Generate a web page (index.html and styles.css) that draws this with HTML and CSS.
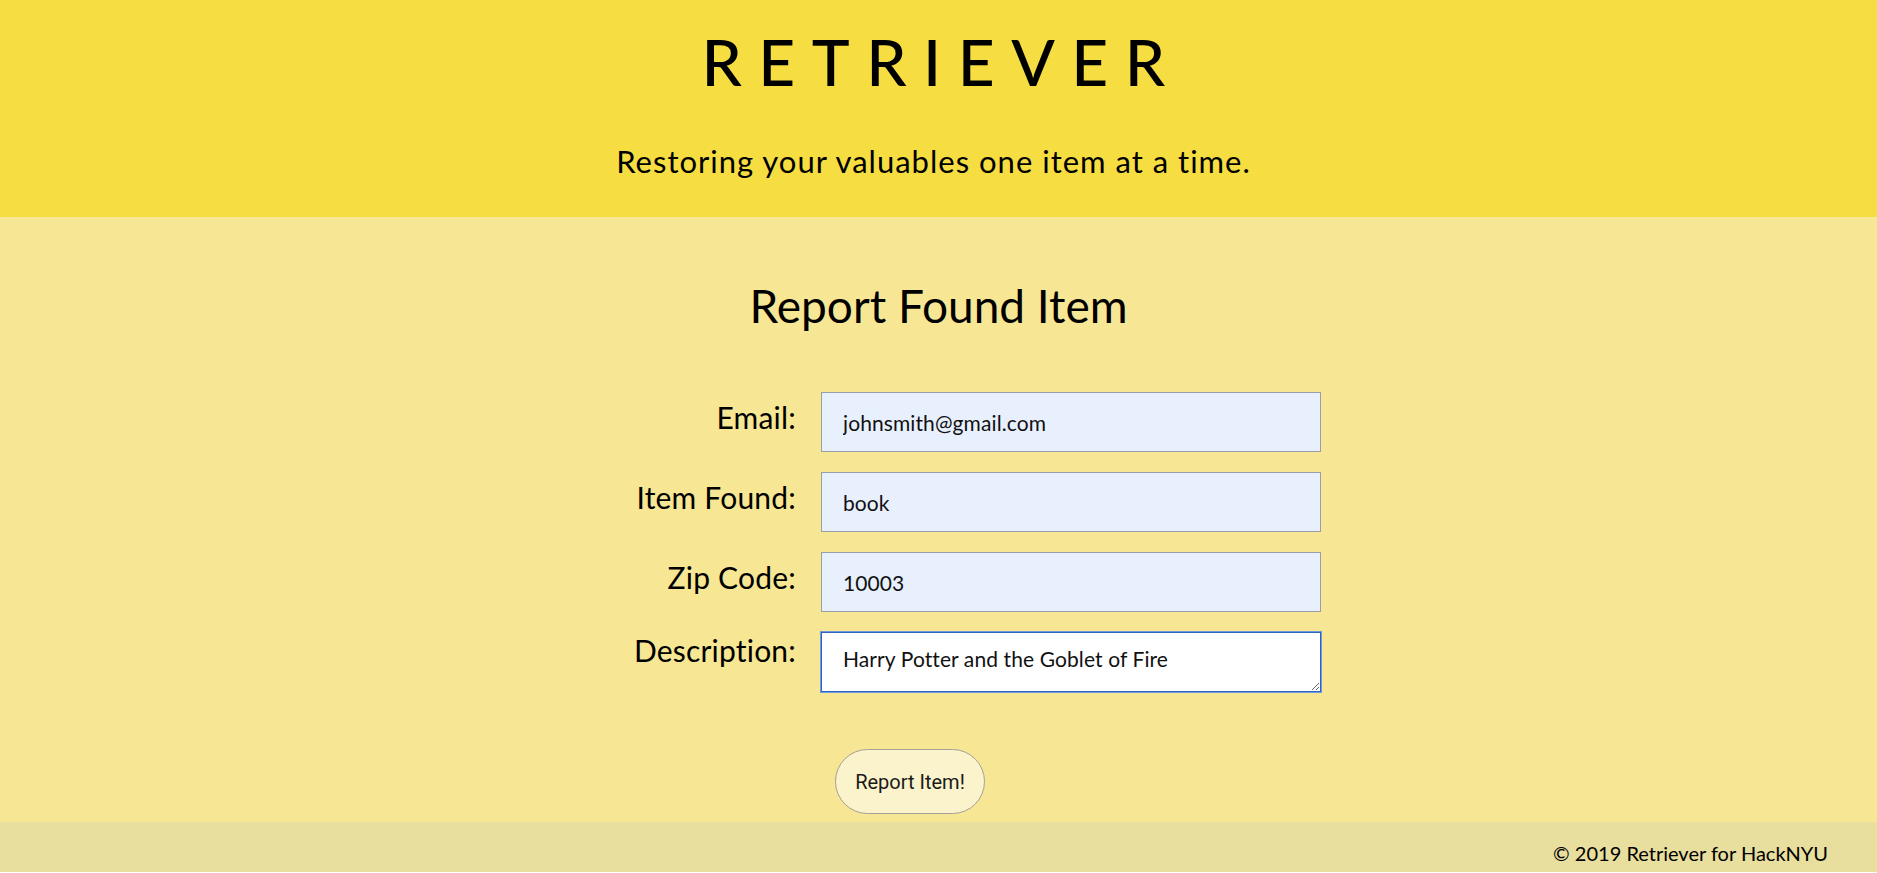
FILE: index.html
```html
<!DOCTYPE html>
<html lang="en">
<head>
<meta charset="utf-8">
<title>Retriever</title>
<link rel="stylesheet" href="styles.css">
</head>
<body>
<header class="hero">
  <h1 class="brand">RETRIEVER</h1>
  <p class="tagline">Restoring your valuables one item at a time.</p>
</header>
<main class="content">
  <h2 class="page-title">Report Found Item</h2>
  <form class="report-form">
    <label class="field-label" for="email">Email:</label>
    <input class="field-input" id="email" type="text" value="johnsmith@gmail.com">
    <label class="field-label" for="item">Item Found:</label>
    <input class="field-input" id="item" type="text" value="book">
    <label class="field-label" for="zip">Zip Code:</label>
    <input class="field-input" id="zip" type="text" value="10003">
    <label class="field-label field-label-top" for="desc">Description:</label>
    <textarea class="field-area" id="desc">Harry Potter and the Goblet of Fire</textarea>
    <div class="actions">
      <button class="submit-btn" type="button">Report Item!</button>
    </div>
  </form>
</main>
<footer class="site-footer">
  <span class="copy">© 2019 Retriever for HackNYU</span>
</footer>
</body>
</html>
```

FILE: styles.css
```css
* { box-sizing: border-box; }
html, body { margin: 0; padding: 0; }
body {
  background: #ffffff;
  font-family: "Lato", "Open Sans", sans-serif;
  color: #000;
}
.hero {
  background: #f5dd42;
  height: 217px;
  padding: 23px 10px 0 0;
  text-align: center;
}
.brand {
  margin: 0 -16px 0 0;
  font-size: 64px;
  line-height: 77px;
  font-weight: 500;
  letter-spacing: 16.5px;
}
.tagline {
  margin: 43px 0 0;
  font-size: 31px;
  line-height: 36px;
  letter-spacing: 1px;
}
.content {
  background: #f7e693;
  height: 605px;
  padding-top: 62px;
}
.page-title {
  margin: 0;
  text-align: center;
  font-size: 46px;
  line-height: 54px;
  font-weight: 400;
}
.report-form {
  width: 885px;
  margin: 59px auto 0;
  display: grid;
  grid-template-columns: 300px 500px;
  column-gap: 25px;
  row-gap: 20px;
  padding-right: 60px;
}
.field-label {
  text-align: right;
  font-size: 30px;
  line-height: 36px;
  letter-spacing: 0.2px;
  padding-top: 7px;
}
.field-label-top { padding-top: 0; }
.field-input, .field-area {
  grid-column: 2;
  height: 60px;
  width: 500px;
  margin: 0;
  font-family: "Lato", "Open Sans", sans-serif;
  font-size: 21px;
  letter-spacing: 0.1px;
  color: #111;
  padding: 0 21px;
}
.field-input {
  background: #e8f0fe;
  border: 1px solid #9a9ea6;
}
.field-area {
  background: #fff;
  border: 1px solid #2f63bd;
  box-shadow: 0 0 0 1px #6f9ae0;
  outline: none;
  padding-top: 14px;
  line-height: 24px;
  resize: both;
}
.actions {
  grid-column: 2;
  padding: 37px 0 0 14px;
}
.submit-btn {
  width: 150px;
  height: 65px;
  border-radius: 33px;
  border: 1px solid #a3a09a;
  background: #fbf3cb;
  font-family: "Roboto", sans-serif;
  font-weight: 400;
  font-size: 20px;
  color: #1a1a1a;
  padding: 0;
}
.site-footer {
  background: #e8de9d;
  height: 50px;
  display: flex;
  justify-content: flex-end;
  align-items: center;
  padding-right: 49px;
}
.copy {
  font-size: 20px;
  padding-top: 12px;
}
```
